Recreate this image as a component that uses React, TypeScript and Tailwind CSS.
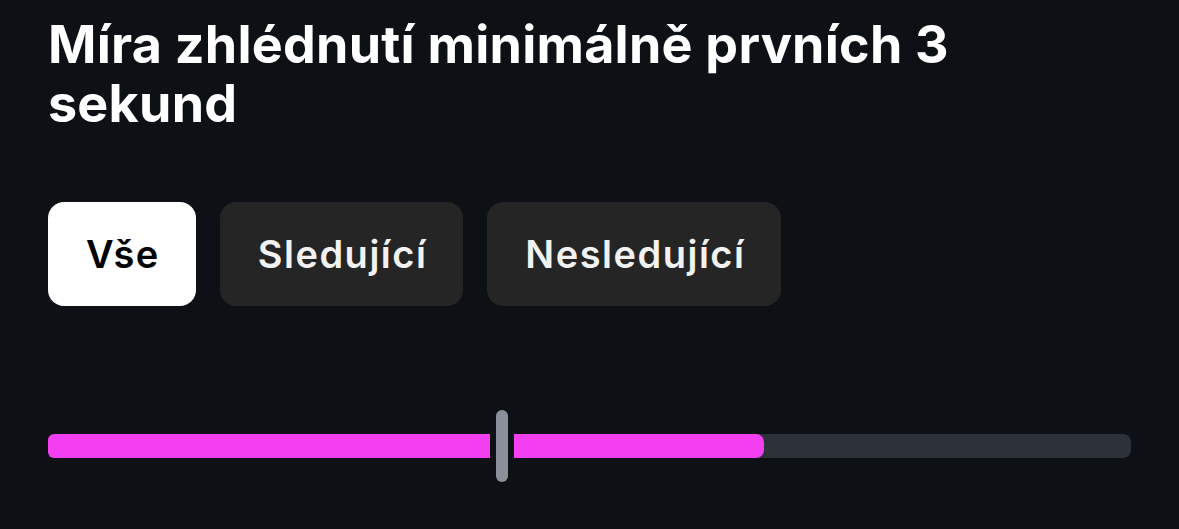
import { useState } from 'react';

const TABS = ['Vše', 'Sledující', 'Nesledující'];

export default function App() {
  const [active, setActive] = useState(0);

  return (
    <div
      className="w-[1179px] h-[529px] bg-[#0d1015] px-[48px] pt-[15px] overflow-hidden"
      style={{ fontFamily: 'Inter, "Noto Sans", sans-serif' }}
    >
      <h1 className="text-[52px] leading-[59px] font-bold text-white tracking-[0.25px] max-w-[960px]">
        Míra zhlédnutí minimálně prvních 3 sekund
      </h1>

      {/* Filter tabs */}
      <div className="flex gap-[24px] mt-[69px]">
        {TABS.map((tab, i) => (
          <button
            key={tab}
            onClick={() => setActive(i)}
            className={
              i === active
                ? 'h-[104px] pl-[38px] pr-[36px] rounded-[16px] bg-white text-black text-[38px] font-semibold tracking-[1.5px]'
                : 'h-[104px] pl-[38px] pr-[36px] rounded-[16px] bg-[#252526] text-[#f2f2f2] text-[38px] font-semibold tracking-[1.5px]'
            }
          >
            {tab}
          </button>
        ))}
      </div>

      {/* Slider */}
      <div className="flex items-center mt-[104px] h-[72px]">
        <div className="w-[442px] h-[24px] bg-[#f43ef2] rounded-l-[6px]" />
        <div className="w-[24px] flex justify-center">
          <div className="w-[12px] h-[72px] rounded-full bg-[#8a9099]" />
        </div>
        <div className="flex-1 h-[24px] bg-[#2d3139] rounded-r-[8px] flex">
          <div className="w-[250px] h-full bg-[#f43ef2] rounded-r-[8px]" />
        </div>
      </div>
    </div>
  );
}
